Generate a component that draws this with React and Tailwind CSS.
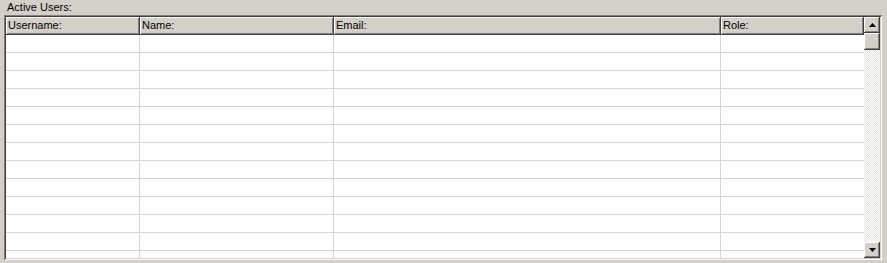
import React from 'react';

const columns = [
  { id: 'username', label: 'Username:' },
  { id: 'name', label: 'Name:' },
  { id: 'email', label: 'Email:' },
  { id: 'role', label: 'Role:' },
];

const raised =
  'shadow-[inset_-1px_-1px_#404040,inset_1px_1px_#ffffff,inset_-2px_-2px_#808080,inset_2px_2px_#d4d0c8]';

const ScrollButton = ({ dir }) => (
  <div className={`w-4 h-4 bg-[#d4d0c8] flex items-center justify-center ${raised}`}>
    <svg width="7" height="4" viewBox="0 0 7 4">
      {dir === 'up' ? (
        <path d="M3.5 0 L7 4 L0 4 Z" fill="#000" />
      ) : (
        <path d="M0 0 L7 0 L3.5 4 Z" fill="#000" />
      )}
    </svg>
  </div>
);

const App = () => {
  const rows = Array.from({ length: 13 }, (_, i) => i);

  return (
    <div className="w-[887px] h-[263px] bg-[#d4d0c8] font-['Liberation_Sans',Arial,sans-serif] text-[11px] text-black overflow-hidden">
      <div className="pl-[7px] pt-px h-[15px] leading-[13px]">Active Users:</div>

      {/* sunken list frame */}
      <div className="ml-[4px] w-[878px] h-[245px] p-[2px] bg-white shadow-[inset_1px_1px_#808080,inset_-1px_-1px_#ffffff,inset_2px_2px_#404040,inset_-2px_-2px_#d4d0c8] flex">
        <div className="w-[858px] overflow-hidden">
          <div className="grid grid-cols-[134px_194px_387px_143px] h-[18px] bg-[#d4d0c8]">
            {columns.map((col) => (
              <div
                key={col.id}
                className="h-[18px] pl-[2px] leading-[17px] shadow-[inset_-1px_-1px_#404040,inset_1px_1px_#ffffff,inset_-2px_-2px_#808080]"
              >
                {col.label}
              </div>
            ))}
          </div>
          {rows.map((r) => (
            <div key={r} className="grid grid-cols-[134px_194px_387px_143px] h-[18px] border-b border-[#d8d5ce]">
              {columns.map((col) => (
                <div key={col.id} className="border-r border-[#d8d5ce] last:border-r-0" />
              ))}
            </div>
          ))}
        </div>

        {/* vertical scrollbar */}
        <div className="w-4 flex flex-col bg-[repeating-conic-gradient(#ffffff_0%_25%,#e4e1dc_0%_50%)] bg-[length:2px_2px]">
          <ScrollButton dir="up" />
          <div className={`w-4 h-[17px] bg-[#d4d0c8] ${raised}`} />
          <div className="flex-1" />
          <ScrollButton dir="down" />
        </div>
      </div>
    </div>
  );
};

export default App;
